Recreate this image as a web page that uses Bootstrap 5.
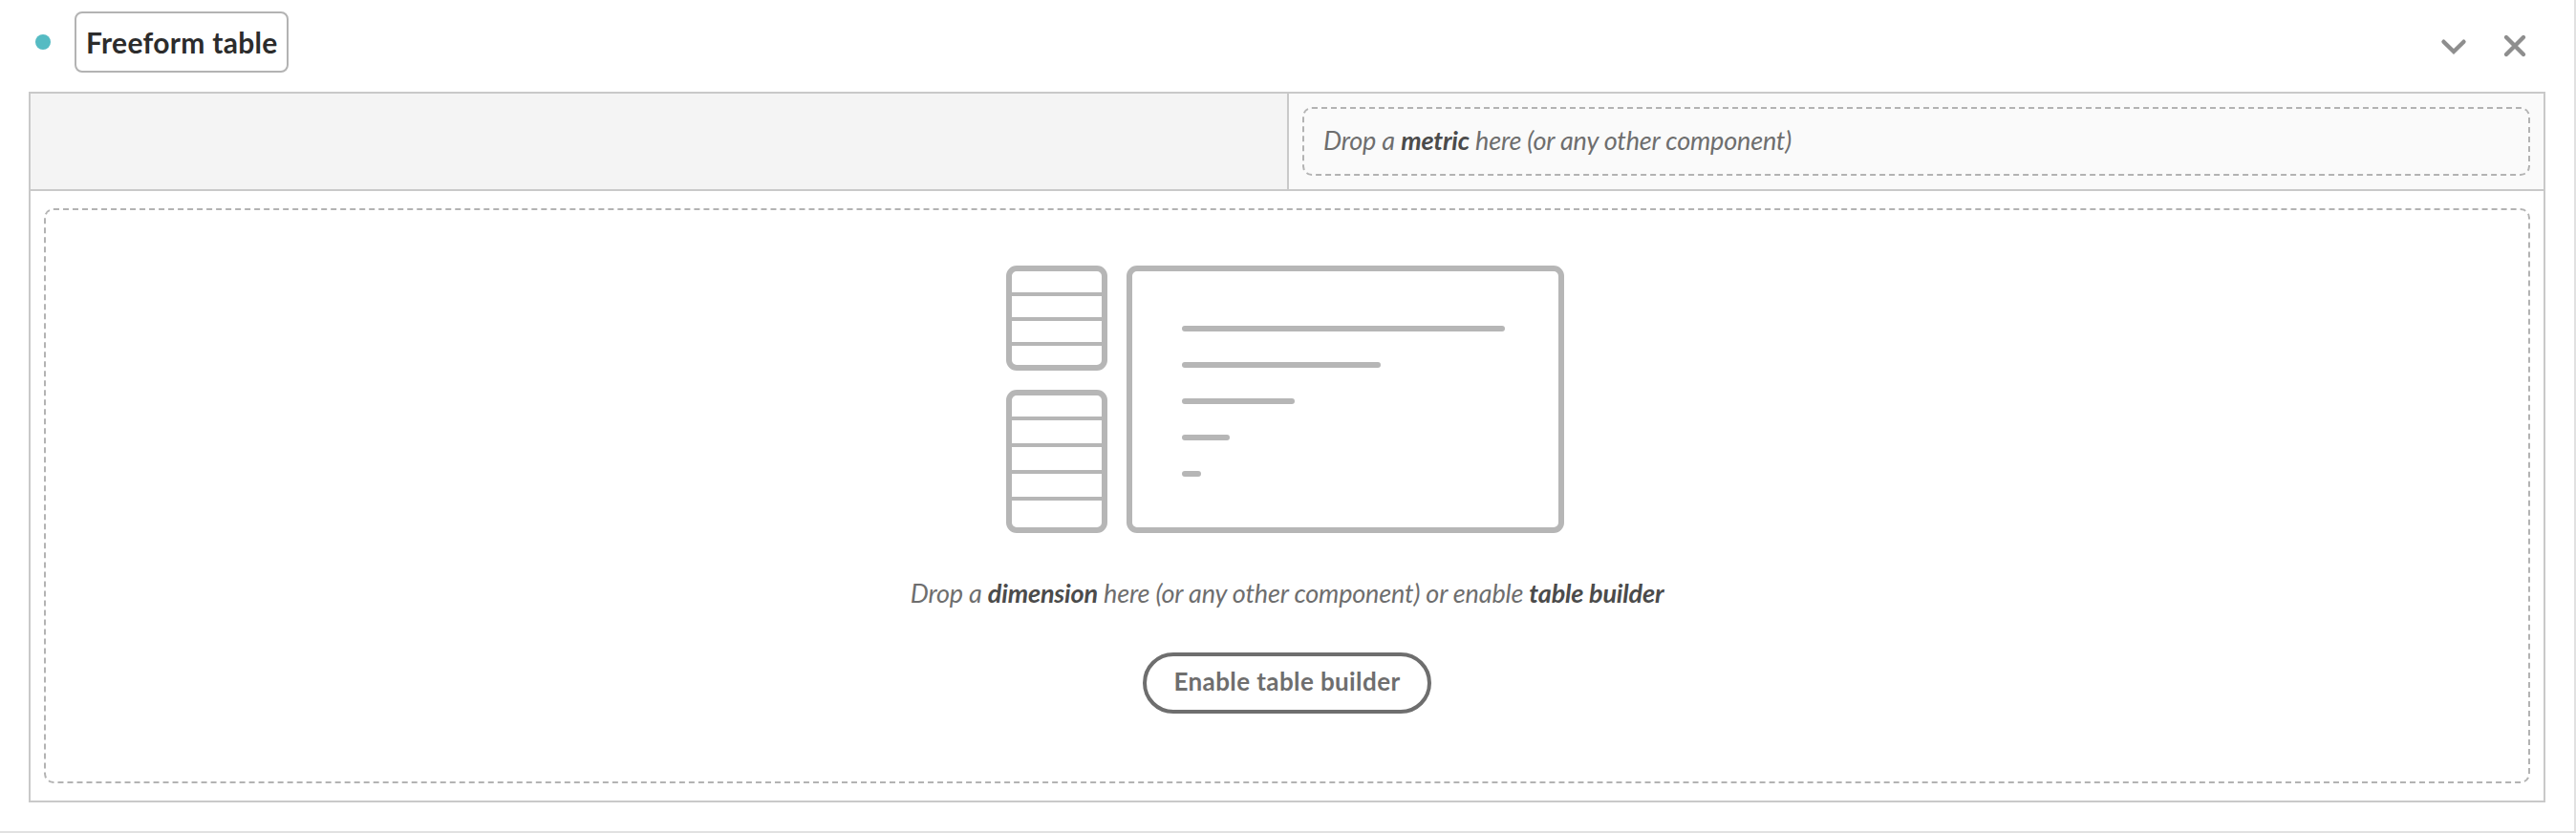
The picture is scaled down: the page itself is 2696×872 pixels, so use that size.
<!DOCTYPE html>
<html lang="en">
<head>
<meta charset="utf-8">
<title>Freeform table</title>
<link href="https://cdn.jsdelivr.net/npm/bootstrap@5.3.0/dist/css/bootstrap.min.css" rel="stylesheet">
<style>
body{font-family:Lato,"Open Sans",sans-serif;background:#fff}
.viz-panel{height:872px;border-right:2px solid #e1e1e1;border-bottom:2px solid #e1e1e1;padding:0 30px 30px}
.viz-head{height:96px;padding:12px 16px 20px 7px}
.status-dot{width:16px;height:16px;background:#55bbc3;margin-right:25px}
.title-box{width:224px;height:64px;border:2px solid #b3b3b3;border-radius:8px;font-size:30px;font-weight:700;line-height:60px;color:#2c2c2c;padding-left:10px;letter-spacing:.3px}
.icon-btn{width:32px;height:32px;color:#8e8e8e}
.viz-tools{padding-top:8px}
.viz-table{border:2px solid #c9c9c9;height:744px}
.viz-top{height:102px;border-bottom:2px solid #c9c9c9;background:#fafafa}
.corner-cell{width:1317px;background:#f4f4f4;border-right:2px solid #c9c9c9}
.metric-cell{padding:14px}
.rows-cell{padding:18px 14px}
.drop-zone{border:2px dashed #b3b3b3;border-radius:10px;font-size:27px;font-style:italic;color:#6e6e6e;white-space:nowrap}
.drop-zone b{font-weight:700;color:#4b4b4b}
.metric-zone{padding:0 0 1px 20px;letter-spacing:-.17px}
.dimension-zone{padding-top:58px}
.hint{line-height:40px;margin-top:43px;letter-spacing:-.17px}
.builder-btn{width:302px;height:64px;margin-top:42px;border:4px solid #6e6e6e;color:#6e6e6e;font-size:26px;font-weight:700;letter-spacing:.4px;line-height:52px;padding:0 0 4px}
</style>
</head>
<body>
<main class="viz-panel">
  <header class="viz-head d-flex align-items-center">
    <span class="status-dot rounded-circle"></span>
    <h1 class="title-box m-0 text-nowrap">Freeform table</h1>
    <div class="viz-tools ms-auto d-flex gap-4 align-items-center">
      <button class="icon-btn btn p-0 border-0 me-2 d-flex" aria-label="Collapse">
        <svg width="32" height="32" viewBox="0 0 32 32" fill="none" stroke="currentColor" stroke-width="4.4" stroke-linecap="round"><path d="M5.500 11.700 16 22 26.500 11.700"/></svg>
      </button>
      <button class="icon-btn btn p-0 border-0 d-flex" aria-label="Remove">
        <svg width="32" height="32" viewBox="0 0 32 32" fill="none" stroke="currentColor" stroke-width="4.4" stroke-linecap="round"><path d="m7 7 18 18M25 7 7 25"/></svg>
      </button>
    </div>
  </header>
  <section class="viz-table d-flex flex-column">
    <div class="viz-top d-flex">
      <div class="corner-cell"></div>
      <div class="metric-cell flex-grow-1 d-flex">
        <div class="drop-zone metric-zone flex-grow-1 d-flex align-items-center"><span>Drop a <b>metric</b> here (or any other component)</span></div>
      </div>
    </div>
    <div class="rows-cell flex-grow-1 d-flex">
      <div class="drop-zone dimension-zone flex-grow-1 d-flex flex-column align-items-center">
        <svg width="588" height="280" viewBox="0 0 588 280" fill="none" stroke="#b6b6b6" stroke-width="6">
          <rect x="3" y="3" width="100" height="104" rx="8"/>
          <rect x="3" y="133" width="100" height="144" rx="8"/>
          <rect x="129" y="3" width="452" height="274" rx="8"/>
          <path stroke-width="4" d="M4 30h98M4 56h98M4 82h98M4 160h98M4 188h98M4 216h98M4 244h98"/>
          <path stroke-linecap="round" d="M190 66h332M190 104h202M190 142h112M190 180h44M190 218h14" transform="translate(-3)"/>
        </svg>
        <div class="hint">Drop a <b>dimension</b> here (or any other component) or enable <b>table builder</b></div>
        <button class="builder-btn btn rounded-pill">Enable table builder</button>
      </div>
    </div>
  </section>
</main>
<script src="https://cdn.jsdelivr.net/npm/bootstrap@5.3.0/dist/js/bootstrap.bundle.min.js"></script>
</body>
</html>
